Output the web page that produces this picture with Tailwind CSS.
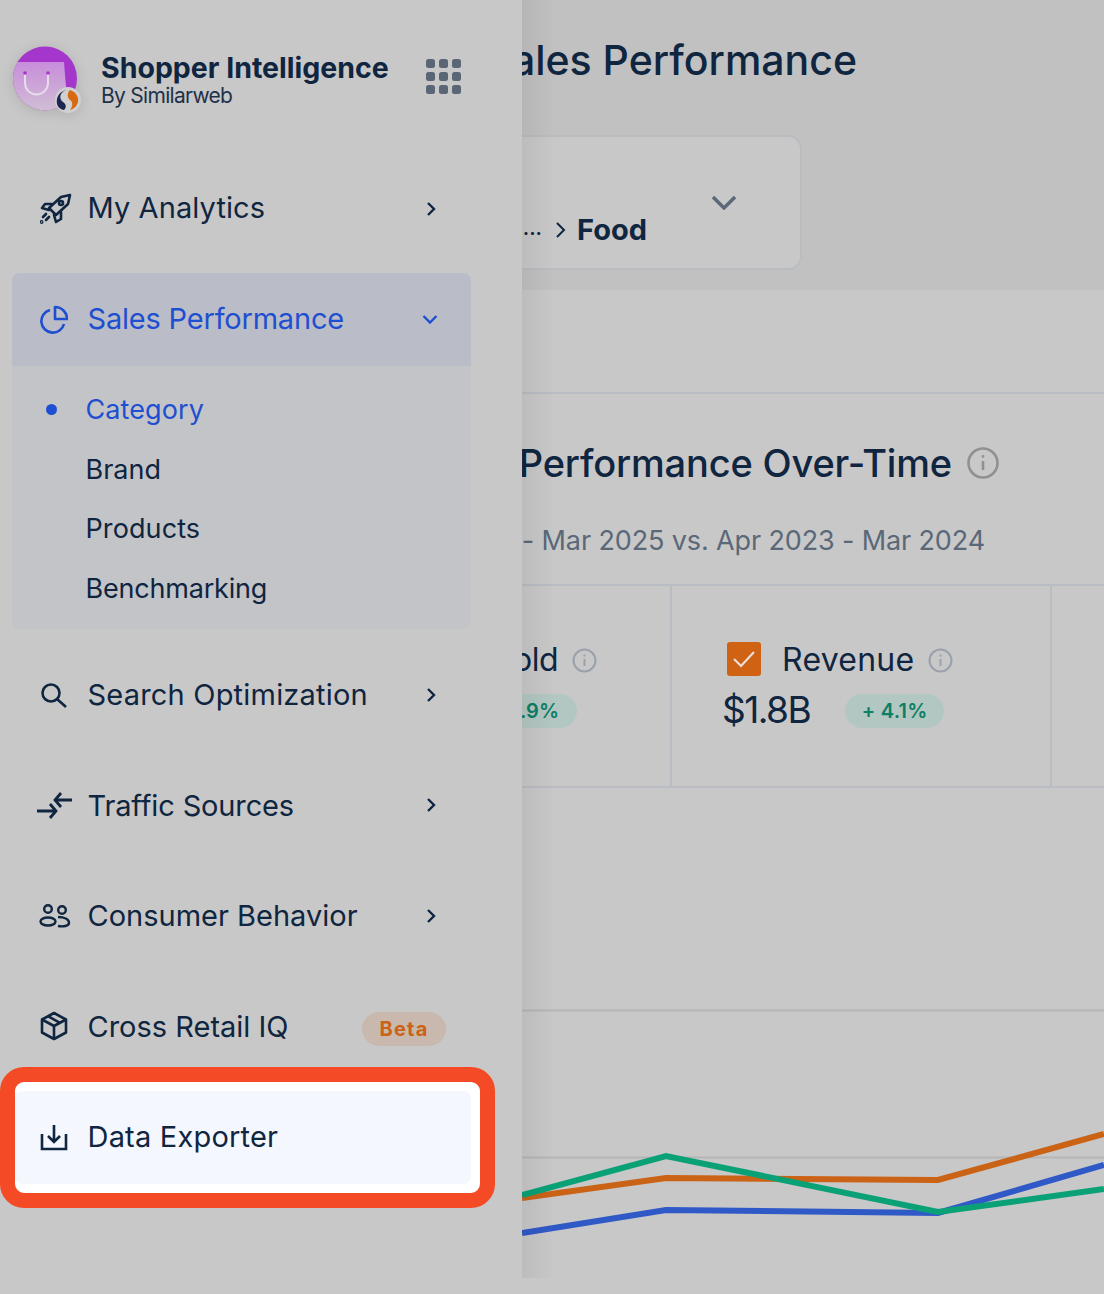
<!DOCTYPE html>
<html lang="en">
<head>
  <meta charset="UTF-8">
  <title>Shopper Intelligence</title>
  <script src="https://cdn.jsdelivr.net/npm/@tailwindcss/browser@4"></script>
</head>
<body class="bg-[#c8c8c8] font-['Inter',sans-serif] text-[#0f2540]">
  <div class="flex w-[1104px] h-[1294px] overflow-hidden">

    <!-- Sidebar -->
    <aside class="w-[522px] shrink-0 relative z-10">
      <div class="h-[162px] flex items-start pl-[13px] pt-[46px]">
        <svg class="w-[69px] h-[69px] shrink-0 drop-shadow-[0_2px_6px_rgba(0,0,0,0.12)]" viewBox="0 0 69 69">
          <defs>
            <linearGradient id="bag" x1="0" y1="0" x2="0" y2="1">
              <stop offset="0" stop-color="#c98ddb"/>
              <stop offset="1" stop-color="#d0bfd4"/>
            </linearGradient>
            <clipPath id="disc"><circle cx="32" cy="32.5" r="32"/></clipPath>
          </defs>
          <circle cx="32" cy="32.5" r="32" fill="#a436cb"/>
          <g clip-path="url(#disc)">
            <path d="M0 16H51L55 66H0Z" fill="url(#bag)"/>
            <path d="M12 27V37A11.5 11.5 0 0 0 35 37V27" fill="none" stroke="#e6dcea" stroke-width="2"/>
          </g>
          <circle cx="12" cy="27" r="1.8" fill="#a436cb"/>
          <circle cx="35" cy="27" r="1.8" fill="#a436cb"/>
          <circle cx="55" cy="54" r="13" fill="#d0d0d0"/>
          <path d="M53 44C46 47 46 53 50 56C53 58 54 61 51 64C45 63 43 58 44 53C45 48 49 45 53 44Z" fill="#1d2552"/>
          <path d="M57 44C63 46 66 51 65 56C64 60 61 63 57 64C60 60 60 56 57 54C54 52 54 47 57 44Z" fill="#d9690f"/>
        </svg>
        <div class="ml-[19px] w-[325px] shrink-0 pt-[1px]">
          <div class="mt-[1px] text-[28.5px] leading-[39px] font-bold whitespace-nowrap">Shopper Intelligence</div>
          <div class="text-[21px] leading-[18px] text-[#1f3148] tracking-[-0.7px]">By Similarweb</div>
        </div>
        <div class="grid grid-cols-3 gap-[4px] w-[35px] mt-[13px]">
          <span class="h-[9px] rounded-[2.5px] bg-[#5a6675]"></span>
          <span class="h-[9px] rounded-[2.5px] bg-[#5a6675]"></span>
          <span class="h-[9px] rounded-[2.5px] bg-[#5a6675]"></span>
          <span class="h-[9px] rounded-[2.5px] bg-[#5a6675]"></span>
          <span class="h-[9px] rounded-[2.5px] bg-[#5a6675]"></span>
          <span class="h-[9px] rounded-[2.5px] bg-[#5a6675]"></span>
          <span class="h-[9px] rounded-[2.5px] bg-[#5a6675]"></span>
          <span class="h-[9px] rounded-[2.5px] bg-[#5a6675]"></span>
          <span class="h-[9px] rounded-[2.5px] bg-[#5a6675]"></span>
        </div>
      </div>

      <nav class="ml-[12px] w-[459px] flex flex-col gap-[17.6px] text-[29px]">
        <a class="h-[93px] flex items-center pl-[28px] pr-[35px]">
          <span class="w-[47.5px] shrink-0">
            <svg class="w-[32px] h-[31px]" viewBox="0 0 32 31" fill="none" stroke="#0f2540" stroke-width="2.6" stroke-linejoin="round" stroke-linecap="round">
              <path d="M30 2L21 4L9 15L16 22L28 11Z"/>
              <path d="M12 11L5 11L2 15L9 17"/>
              <path d="M21 19V26L16 29L14 22"/>
              <circle cx="21" cy="10" r="2"/>
              <path d="M6 21L3 24M9 24L6 27"/>
              <circle cx="1.6" cy="29" r="0.6"/>
            </svg>
          </span>
          <span class="mt-[-2px] tracking-[0.1px]">My Analytics</span>
          <svg class="ml-auto w-[10px] h-[16px]" viewBox="0 0 10 16" fill="none" stroke="#0f2540" stroke-width="2.4"><path d="M2 2L8 8L2 14"/></svg>
        </a>

        <div class="rounded-[8px] overflow-hidden">
          <a class="h-[93px] flex items-center pl-[28px] pr-[33px] bg-[#babdc7] text-[#1f4fd1]">
            <span class="w-[47.5px] shrink-0">
              <svg class="w-[28px] h-[29px]" viewBox="0 0 28 29" fill="none" stroke="#1f4fd1" stroke-width="2.6" stroke-linejoin="round">
                <path d="M10 5A11.5 11.5 0 1 0 24 19"/>
                <path d="M15 2A12 12 0 0 1 27 14H15Z"/>
              </svg>
            </span>
            <span class="tracking-[-0.2px]">Sales Performance</span>
            <svg class="ml-auto w-[16px] h-[11px]" viewBox="0 0 16 11" fill="none" stroke="#1f4fd1" stroke-width="2.4"><path d="M1.5 2L8 8.5L14.5 2"/></svg>
          </a>
          <div class="h-[263px] bg-[#c3c4c8] pt-[14.5px] text-[27px] leading-[59.6px]">
            <div class="flex items-center text-[#1f4fd1]">
              <span class="ml-[34px] w-[11px] h-[11px] rounded-full bg-[#1f4fd1]"></span>
              <span class="ml-[28.5px] tracking-[0.1px]">Category</span>
            </div>
            <div class="pl-[73.5px]">Brand</div>
            <div class="pl-[73.5px] tracking-[0.1px]">Products</div>
            <div class="pl-[73.5px] tracking-[-0.2px]">Benchmarking</div>
          </div>
        </div>

        <a class="mt-[2px] h-[93px] flex items-center pl-[28px] pr-[35px]">
          <span class="w-[47.5px] shrink-0">
            <svg class="w-[27px] h-[26px]" viewBox="0 0 27 26" fill="none" stroke="#0f2540" stroke-width="2.6"><circle cx="11" cy="11" r="8.5"/><path d="M17 17L26 25"/></svg>
          </span>
          <span class="tracking-[0.2px]">Search Optimization</span>
          <svg class="ml-auto w-[10px] h-[16px]" viewBox="0 0 10 16" fill="none" stroke="#0f2540" stroke-width="2.4"><path d="M2 2L8 8L2 14"/></svg>
        </a>

        <a class="h-[93px] flex items-center pl-[25px] pr-[35px]">
          <span class="w-[50.5px] shrink-0">
            <svg class="w-[35px] h-[28px]" viewBox="0 0 35 28" fill="none" stroke="#0f2540" stroke-width="2.8"><path d="M35 9H18M24 2L18 9L24 16"/><path d="M0 20H19M13 13L19 20L13 27"/></svg>
          </span>
          <span class="tracking-[-0.15px]">Traffic Sources</span>
          <svg class="ml-auto w-[10px] h-[16px]" viewBox="0 0 10 16" fill="none" stroke="#0f2540" stroke-width="2.4"><path d="M2 2L8 8L2 14"/></svg>
        </a>

        <a class="h-[93px] flex items-center pl-[27px] pr-[35px]">
          <span class="w-[48.5px] shrink-0">
            <svg class="w-[32px] h-[24px]" viewBox="0 0 32 24" fill="none" stroke="#0f2540" stroke-width="2.4">
              <circle cx="9" cy="5" r="3.8"/>
              <ellipse cx="9" cy="17.5" rx="7.5" ry="4"/>
              <circle cx="23" cy="6" r="3.8"/>
              <path d="M19 13C25 13 30 15 30 19C30 22 24 23 19 22"/>
            </svg>
          </span>
          <span>Consumer Behavior</span>
          <svg class="ml-auto w-[10px] h-[16px]" viewBox="0 0 10 16" fill="none" stroke="#0f2540" stroke-width="2.4"><path d="M2 2L8 8L2 14"/></svg>
        </a>

        <a class="h-[93px] flex items-center pl-[28px] pr-[25px]">
          <span class="w-[47.5px] shrink-0">
            <svg class="w-[28px] h-[30px]" viewBox="0 0 28 30" fill="none" stroke="#0f2540" stroke-width="2.6" stroke-linejoin="round">
              <path d="M14 2L26 8.5V21.5L14 28L2 21.5V8.5Z"/>
              <path d="M2 8.5L14 15L26 8.5M14 15V28M8 5.2L20 11.8"/>
            </svg>
          </span>
          <span>Cross Retail IQ</span>
          <span class="ml-auto mt-[6px] w-[84px] h-[34px] rounded-full bg-[#c9b8ae] flex items-center justify-center text-[20px] font-bold tracking-[1.2px] text-[#cb6317]">Beta</span>
        </a>

        <a class="relative h-[93px] flex items-center pl-[28px] pr-[35px]">
          <span class="absolute left-[-12px] top-[-24px] w-[495px] h-[141px] bg-white border-[15px] border-[#f44a25] rounded-[24px]"></span>
          <span class="absolute left-[3px] right-0 top-0 bottom-0 bg-[#f4f7fe] rounded-[8px]"></span>
          <span class="relative w-[47.5px] shrink-0">
            <svg class="w-[28px] h-[27px]" viewBox="0 0 28 27" fill="none" stroke="#0f2540" stroke-width="2.6"><path d="M2 10V25H26V10"/><path d="M14 1V17M8 12L14 18L20 12"/></svg>
          </span>
          <span class="relative tracking-[0.2px]">Data Exporter</span>
        </a>
      </nav>
    </aside>

    <!-- Main, mostly covered by the sidebar -->
    <main class="relative w-[582px] h-[1278px] overflow-hidden">
      <div class="h-[290px] bg-[#c1c1c1] pt-[34px]">
        <div class="w-[335px] h-[52px] flex justify-end">
          <h1 class="text-[41px] leading-[52px] font-medium whitespace-nowrap shrink-0">Sales Performance</h1>
        </div>
        <div class="mt-[49px] ml-[-40px] w-[320px] h-[135px] flex justify-end rounded-[14px] border-2 border-[#b9bdc2] bg-[#c8c8c8]">
          <div class="self-end mb-[20px] flex items-center whitespace-nowrap">
            <span class="text-[20px] font-semibold leading-[36px] mt-[-4px]">...</span>
            <svg class="ml-[13px] mr-[11px] w-[11px] h-[18px]" viewBox="0 0 11 18" fill="none" stroke="#0f2540" stroke-width="2"><path d="M2 2L9 9L2 16"/></svg>
            <span class="text-[29px] leading-[36px] font-bold">Food</span>
          </div>
          <svg class="ml-[65px] mr-[64px] mt-[58px] w-[24px] h-[15px]" viewBox="0 0 24 15" fill="none" stroke="#5a6878" stroke-width="3.4"><path d="M1 2L12 13L23 2"/></svg>
        </div>
      </div>

      <div class="h-[104px] border-b-2 border-[#b9bdc3]"></div>

      <div class="w-[477px] mt-[44px] h-[50px] flex justify-end items-center">
        <h2 class="text-[38px] leading-[50px] font-medium tracking-[-0.17px] whitespace-nowrap shrink-0">Sales Performance Over-Time</h2>
        <svg class="ml-[15px] w-[32px] h-[32px] shrink-0" viewBox="0 0 32 32" fill="none" stroke="#909090"><circle cx="16" cy="16" r="14.5" stroke-width="2.6"/><path d="M16 14V23" stroke-width="2.6"/><circle cx="16" cy="9.5" r="0.6" stroke-width="1.6"/></svg>
      </div>
      <div class="w-[463px] mt-[34px] flex justify-end">
        <p class="text-[27px] leading-[38px] text-[#5a6878] tracking-[-0.13px] whitespace-nowrap shrink-0">Apr 2024 - Mar 2025 vs. Apr 2023 - Mar 2024</p>
      </div>

      <div class="mt-[24px] h-[204px] flex border-y-2 border-[#b9bdc3]">
        <div class="w-[150px] shrink-0 border-r-2 border-[#b9bdc3] flex flex-col items-end pr-[73px] pt-[54px]">
          <div class="flex items-center h-[40px] text-[32px] whitespace-nowrap tracking-[-0.5px]">
            <span class="shrink-0">Units Sold</span>
            <svg class="ml-[14px] w-[25px] h-[25px] shrink-0" viewBox="0 0 25 25" fill="none" stroke="#9aa1ab" stroke-width="2"><circle cx="12.5" cy="12.5" r="11"/><path d="M12.5 11V18"/><path d="M12.5 6.5V8.5"/></svg>
          </div>
          <span class="mt-[14px] mr-[20px] h-[34px] rounded-full bg-[#b3c7c2] px-[18px] flex items-center text-[20px] font-semibold text-[#0d7f66] whitespace-nowrap shrink-0">+ 3.9%</span>
        </div>
        <div class="w-[380px] shrink-0 border-r-2 border-[#b9bdc3] pl-[50px] pt-[54px]">
          <div class="flex items-center h-[40px]">
            <span class="ml-[5px] mt-[-3px] w-[34px] h-[34px] rounded-[3px] bg-[#d06213] flex items-center justify-center">
              <svg class="w-[24px] h-[20px]" viewBox="0 0 24 20" fill="none" stroke="#eadfd6" stroke-width="2.2"><path d="M2 10L9 17L22 3"/></svg>
            </span>
            <span class="ml-[21px] text-[32px] tracking-[0.25px]">Revenue</span>
            <svg class="ml-[14px] w-[25px] h-[25px] shrink-0" viewBox="0 0 25 25" fill="none" stroke="#9aa1ab" stroke-width="2"><circle cx="12.5" cy="12.5" r="11"/><path d="M12.5 11V18"/><path d="M12.5 6.5V8.5"/></svg>
          </div>
          <div class="flex items-center mt-[14px]">
            <span class="mt-[-3px] text-[37px] leading-[34px] tracking-[-1.5px]">$1.8B</span>
            <span class="ml-[35px] h-[34px] rounded-full bg-[#b3c7c2] w-[99px] justify-center flex items-center text-[20px] font-semibold tracking-[0.3px] text-[#0d7f66] whitespace-nowrap">+ 4.1%</span>
          </div>
        </div>
      </div>

      <svg class="mt-[212px] block w-[582px] h-[278px]" viewBox="522 1000 582 278" fill="none">
        <path d="M522 1010.5H1104M522 1157.5H1104" stroke="#b5b5b5" stroke-width="2"/>
        <polyline points="522,1233 666,1210 938,1213 1104,1165" stroke="#3059c8" stroke-width="6"/>
        <polyline points="522,1198 666,1178 938,1180 1104,1134" stroke="#cb6317" stroke-width="6"/>
        <polyline points="522,1195 666,1156 938,1212 1104,1189" stroke="#0aa177" stroke-width="6"/>
      </svg>

      <!-- sidebar shadow -->
      <div class="absolute left-0 top-0 bottom-0 w-[34px] bg-gradient-to-r from-black/6 to-transparent"></div>
    </main>
  </div>
</body>
</html>
